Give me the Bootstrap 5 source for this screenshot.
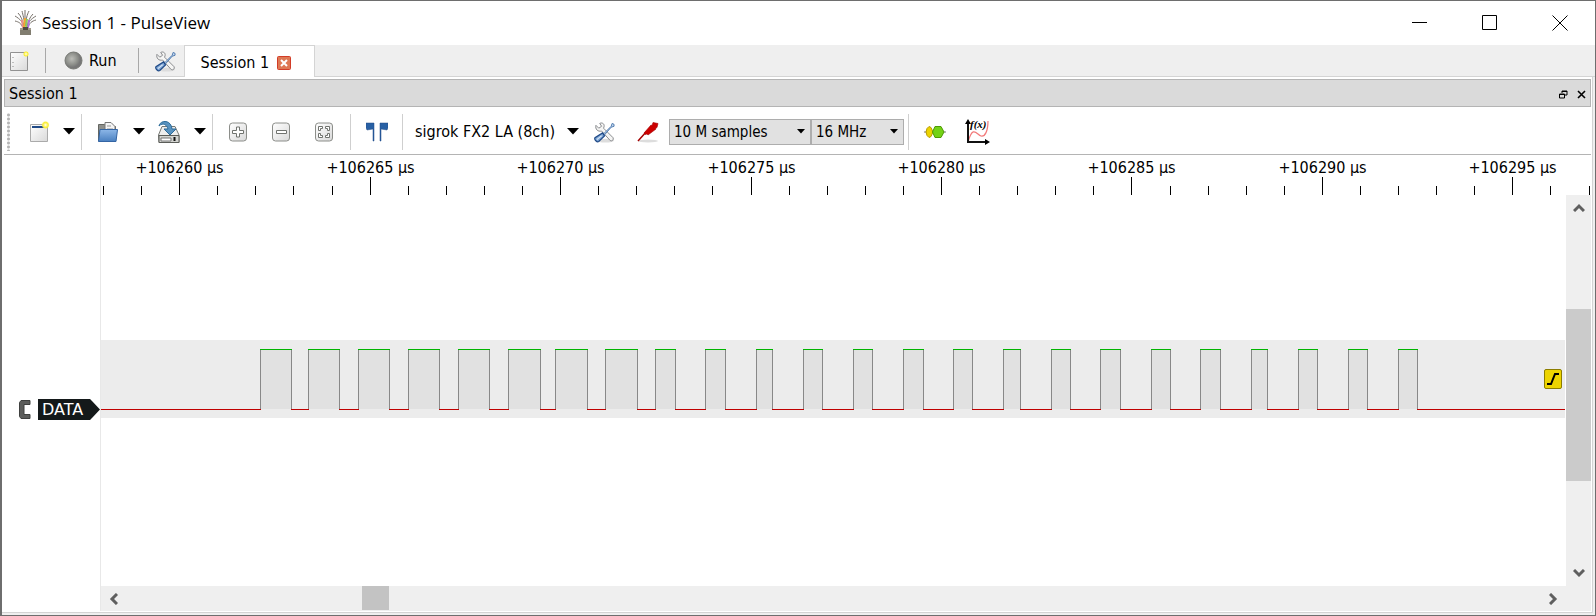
<!DOCTYPE html>
<html lang="en">
<head>
<meta charset="utf-8">
<meta name="viewport" content="width=device-width, initial-scale=1">
<title>Session 1 - PulseView</title>
<link href="https://cdn.jsdelivr.net/npm/bootstrap@5.3.0/dist/css/bootstrap.min.css" rel="stylesheet">
<style>
body { font: 16px/20px "DejaVu Sans Condensed", "DejaVu Sans", sans-serif; color: #000; background: #6e6e6e; }
.app-frame { padding: 1px 1px 1px 2px; }
.app-inner { background: #efefef; }
button, select { color: inherit; font: inherit; }
.flat { border: 0; padding: 0; background: none; display: flex; align-items: center; justify-content: center; flex: none; }
svg { display: block; flex: none; }
.titlebar { height: 44px; padding-left: 12px; font: 17px/24px "Open Sans", "Noto Sans", sans-serif; }
.titlebar h1 { font: inherit; margin: 0 0 0 5px; }
.titlebar .flat { width: 70px; height: 44px; }
.tabstrip { height: 32px; }
.strip-tools { border-bottom: 1px solid #d4d4d4; padding-left: 7px; }
.vr-line { width: 1px; height: 25px; background: #a8a8a8; flex: none; }
.run-btn { gap: 6px; margin: 0 21px 0 18px; }
.session-tab { width: 131px; padding: 2px 0 0 16px; gap: 8px; border: 1px solid #d4d4d4; border-bottom: 0; }
.dock { border: solid #d4d4d4; border-width: 0 1px 1px 0; margin: 0 2px 2px 0; padding: 2px 1px 1px 2px; }
.dock-title { height: 28px; background: #dadada; border: 1px solid #b4b4b4; padding: 2px 0 0 4px; }
.dock-title h2 { font: inherit; margin: 0; }
.dock-title .flat { width: 18px; height: 18px; }
.toolbar { height: 48px; border-bottom: 1px solid #b4b4b4; padding: 2px 3px 0; }
.grip { width: 3px; height: 38px; background: radial-gradient(circle, #b5b5b5 1px, transparent 2px) 0 0 / 3px 4px; }
.tool-sep { width: 1px; height: 36px; background: #cfcfcf; flex: none; }
.ico { width: 43px; height: 36px; }
.ico-menu { width: 16px; height: 36px; }
.file-menu { margin-left: 2px; }
.device-btn { gap: 12px; }
.combo { appearance: none; height: 26px; border: 1px solid #adadad; border-radius: 0; padding: 0 20px 0 4px; font-size: 15px; background: #e1e1e1 url("data:image/svg+xml,%3Csvg xmlns='http://www.w3.org/2000/svg' width='8' height='5'%3E%3Cpath d='M0 0h8L4 4.5z'/%3E%3C/svg%3E") no-repeat right 5px center; }
.combo-samples { width: 142px; }
.combo-rate { width: 93px; }
.headers { width: 97px; border-right: 1px solid #e8e8e8; }
.ruler { height: 40px; }
.ruler text { text-anchor: middle; }
.signal-area { height: 391px; }
.channel { padding-top: 244px; gap: 7px; padding-left: 14px; }
.channel-name { width: 62px; height: 21px; background: #14191a; color: #fff; font-family: "DejaVu Sans", sans-serif; justify-content: flex-start; padding-left: 4px; clip-path: polygon(0 0, 84% 0, 100% 50%, 84% 100%, 0 100%); }
.canvas-pane { padding-right: 1px; }
.trace { height: 78px; margin-top: 145px; background: #ececec; }
.trigger { right: 3px; top: 29px; width: 18px; height: 20px; border: 1px solid #8c7d00; border-radius: 2px; background: #edd400; }
.scroll-v { width: 25px; background: #efefef; }
.scroll-h { height: 25px; background: #efefef; padding-right: 25px; }
.scroll-v .flat, .scroll-h .flat { width: 25px; height: 25px; }
.track { position: relative; }
.thumb { position: absolute; background: #cbcbcb; }
.thumb-h { top: 0; bottom: 1px; background: #c3c3c3; }
</style>
</head>
<body>
<svg width="0" height="0" class="position-absolute" aria-hidden="true">
  <defs>
    <linearGradient id="paper" x2="1" y2="1"><stop stop-color="#fff"/><stop offset="1" stop-color="#d9d9d9"/></linearGradient>
    <linearGradient id="blue" x2="0" y2="1"><stop stop-color="#8db7e8"/><stop offset="1" stop-color="#4a80c0"/></linearGradient>
    <radialGradient id="ball" cx=".4" cy=".4"><stop stop-color="#bcbdb8"/><stop offset=".7" stop-color="#8d8f8a"/><stop offset="1" stop-color="#777"/></radialGradient>
    <radialGradient id="sun"><stop stop-color="#fff"/><stop offset=".35" stop-color="#fff680"/><stop offset=".7" stop-color="#f8ed32"/><stop offset="1" stop-color="#fff45a" stop-opacity=".15"/></radialGradient>
    <symbol id="tools" viewBox="0 0 22 22">
      <ellipse cx="12" cy="20" rx="9" ry="2" fill="#ddd"/>
      <path d="M2 4 5 7 8 5 6 2C9 .5 12 3 10 7l10 10c1 2-1 4-3 3L8 10C4 11 1 8 2 4Z" fill="#f5f5f4" stroke="#85878a"/>
      <path d="m10 13 8-8 1-3 2 1v2l-3 1-7 8Z" fill="#c5daf1" stroke="#4d79ad"/>
      <path d="m9 12 2 3-6 6c-2 1-5-2-4-4Z" fill="#7fa7d6" stroke="#204a87" stroke-width="1.3"/><path d="m8 15-5 4" stroke="#d6e5f6" stroke-width="1.2"/>
    </symbol>
    <symbol id="caret" viewBox="0 0 12 7"><path d="M0 0h12L6 6.500z"/></symbol>
    <symbol id="chev" viewBox="0 0 12 9"><path d="m1 8 5-5 5 5" fill="none" stroke="#5f5f5f" stroke-width="3"/></symbol>
  </defs>
</svg>
<div class="app-frame min-vh-100 d-flex flex-column">
<div class="app-inner flex-fill d-flex flex-column">
  <header class="titlebar bg-white d-flex align-items-center">
    <svg width="23" height="26" viewBox="0 0 23 26" fill="none">
      <path d="M10 17C9 12 6 9 1 6m9 11C9 11 7 6 4 3m7 13C10 9 9 5 8 1m3 15V0m1 16c0-8 1-11 3-15m-2 16c1-6 3-10 6-13m-6 13c1-5 4-8 9-11M9 18C7 13 5 12 1 11m13 7c1-5 4-7 8-8" stroke="#77716a"/>
      <path d="M9 18 8 10" stroke="#e99090" stroke-width="2"/><path d="m10 18 1-10" stroke="#f4a632" stroke-width="2"/><path d="m12 18 1-9" stroke="#8ccf5a" stroke-width="2"/><path d="m14 18 1-8" stroke="#ae76dd" stroke-width="2"/>
      <path d="M6 18h11v7H6z" fill="#817d70"/><path d="M6 18h11v2H6z" fill="#a09b8b"/><path d="M9 17h5v3H9z" fill="#4f4b44"/>
    </svg>
    <h1 class="me-auto">Session 1 - PulseView</h1>
    <button class="flat" aria-label="Minimize"><svg width="16" height="16"><path d="M0 7.500h15" stroke="#000"/></svg></button>
    <button class="flat" aria-label="Maximize"><svg width="16" height="16"><path d="M.5.500h14v14H.5z" fill="none" stroke="#000"/></svg></button>
    <button class="flat" aria-label="Close"><svg width="16" height="16"><path d="m.5.500 15 15m0-15-15 15" stroke="#000"/></svg></button>
  </header>

  <nav class="tabstrip d-flex">
    <div class="strip-tools d-flex align-items-center">
      <button class="flat" aria-label="New session"><svg width="20" height="22" viewBox="0 0 20 22"><path d="M1.500 2.500h17v18h-17z" fill="url(#paper)" stroke="#929292"/><path d="M4 7v1m0 4v1m0 3v1" stroke="#888"/><circle cx="17" cy="4" r="3" fill="url(#sun)"/></svg></button>
      <span class="vr-line ms-3"></span>
      <button class="flat run-btn"><svg width="19" height="19"><circle cx="9.500" cy="9.500" r="8.500" fill="url(#ball)" stroke="#777974"/></svg>Run</button>
      <span class="vr-line me-3"></span>
      <button class="flat me-2" aria-label="Settings"><svg width="21" height="22"><use href="#tools"/></svg></button>
    </div>
    <div class="session-tab bg-white d-flex align-items-center">
      <span>Session 1</span>
      <button class="flat" aria-label="Close session"><svg width="14" height="14"><rect x=".5" y=".5" width="13" height="13" rx="1" fill="#de7854" stroke="#d23c27"/><path d="m4 4 6 6m0-6-6 6" stroke="#fff" stroke-width="2"/></svg></button>
    </div>
    <div class="strip-tools flex-fill"></div>
  </nav>

  <main class="dock bg-white flex-fill d-flex flex-column">
    <div class="dock-title d-flex align-items-center">
      <h2 class="me-auto">Session 1</h2>
      <button class="flat" aria-label="Float"><svg width="9" height="9" fill="none" stroke="#000"><path d="M3 3V1h5v4H6M3 1.500h5"/><path d="M.5 4h5v4h-5zM0 4.500h6"/></svg></button>
      <button class="flat" aria-label="Close dock"><svg width="9" height="9"><path d="m1 1 7 7m0-7-7 7" stroke="#000" stroke-width="1.600"/></svg></button>
    </div>

    <div class="toolbar d-flex align-items-center" role="toolbar">
      <span class="grip"></span>
      <button class="flat ico ms-2" aria-label="New view"><svg width="21" height="22" viewBox="0 0 21 22"><path d="M1.500 3.500h17v17h-17z" fill="url(#paper)" stroke="#aaa"/><path d="M3 6h15" stroke="#204a87" stroke-width="2"/><circle cx="16.500" cy="4" r="4" fill="url(#sun)"/></svg></button>
      <button class="flat ico-menu" aria-label="New view menu"><svg width="12" height="7"><use href="#caret"/></svg></button>
      <span class="tool-sep ms-1"></span>
      <button class="flat ico ms-1" aria-label="Open"><svg width="22" height="22" viewBox="0 0 22 22"><path d="M1.500 20V3.500h6l2 2h9V20Z" fill="#8e908c" stroke="#646661"/><path d="M8 10V1.500h6l4 4V10" fill="#f5f5f5" stroke="#777"/><path d="M10 5h4m-4 3h6" stroke="#999"/><path d="M3 8.500h17.500L19 20.500H1.500Z" fill="url(#blue)" stroke="#3465a4"/></svg></button>
      <button class="flat ico-menu file-menu" aria-label="Open menu"><svg width="12" height="7"><use href="#caret"/></svg></button>
      <button class="flat ico" aria-label="Save"><svg width="24" height="24" viewBox="0 0 24 24"><path d="M1.500 15 5 6.500h13l4 8.500v7.500h-20Z" fill="#eee" stroke="#777974"/><path d="M2 15.500h20v7H2z" fill="#d3d4d0" stroke="#5b5d59"/><path d="M4 18h10v3H4z" fill="#fff" stroke="#777"/><path d="M17.500 17v4" stroke="#111" stroke-width="2"/><path d="M2 6C3 0 14-1 15 9h4l-6 6-6-6h4C10 5 6 2 2 6Z" fill="#5892bf" stroke="#2c6b99"/></svg></button>
      <button class="flat ico-menu file-menu" aria-label="Save menu"><svg width="12" height="7"><use href="#caret"/></svg></button>
      <span class="tool-sep ms-1"></span>
      <button class="flat ico ms-1" aria-label="Zoom in"><svg width="19" height="20" viewBox="0 0 19 20"><rect x=".5" y="1" width="17" height="18" rx="3" fill="url(#paper)" stroke="#8c8e8a"/><path d="M7.500 5h3v3.500h4v3h-4V15h-3v-3.500h-4v-3h4z" fill="#fff" stroke="#70736f"/></svg></button>
      <button class="flat ico" aria-label="Zoom out"><svg width="19" height="20" viewBox="0 0 19 20"><rect x=".5" y="1" width="17" height="18" rx="3" fill="url(#paper)" stroke="#8c8e8a"/><path d="M4.500 8.500h10v3h-10z" fill="#fff" stroke="#70736f"/></svg></button>
      <button class="flat ico" aria-label="Zoom to fit"><svg width="19" height="20" viewBox="0 0 19 20"><rect x=".5" y="1" width="17" height="18" rx="3" fill="url(#paper)" stroke="#8c8e8a"/><path d="M3.500 8.500v-4h4v2h-2v2zM10.500 4.500h4v4h-2v-2h-2zM3.500 11.500v4h4v-2h-2v-2zM14.500 11.500v4h-4v-2h2v-2z" fill="#fff" stroke="#70736f"/></svg></button>
      <span class="tool-sep ms-1"></span>
      <button class="flat ico ms-1" aria-label="Show cursors"><svg width="22" height="20"><path d="M0 1h8v18H7V7L1 8 0 6zM22 1h-8v18h1V7l6 1 1-2z" fill="#2860a4" stroke="#204a87" stroke-width=".5"/></svg></button>
      <span class="tool-sep ms-1"></span>
      <button class="flat ms-2 ps-1 device-btn">sigrok FX2 LA (8ch)<svg width="12" height="7"><use href="#caret"/></svg></button>
      <button class="flat ico ms-1" aria-label="Configure device"><svg width="21" height="22"><use href="#tools"/></svg></button>
      <button class="flat ico" aria-label="Configure channels"><svg width="22" height="22" viewBox="0 0 22 22"><ellipse cx="11" cy="20" rx="10" ry="1.500" fill="#ddd"/><path d="M1 20 10 10" stroke="#a40000" stroke-width="1.500"/><path d="m7 12 7-8 1 .500 1-3 5 1-1 4-1.500.500.500 1-8 6-1-1-2 .500Z" fill="#cc0000" stroke="#a40000" stroke-width=".6"/></svg></button>
      <select class="combo combo-samples" aria-label="Sample count"><option>10 M samples</option></select>
      <select class="combo combo-rate" aria-label="Sample rate"><option>16 MHz</option></select>
      <span class="tool-sep ms-1"></span>
      <button class="flat ico ms-1" aria-label="Add protocol decoder"><svg width="22" height="14" viewBox="0 0 22 14"><path d="M0 7h22" stroke="#777"/><path d="m5 1.500 2 1 2 4.500-2 4.500-2 1-2-2L2 7l1-3.500Z" fill="#edd400" stroke="#b79b00"/><path d="M11 1.500h6L20 7l-3 5.500h-6L8.500 7Z" fill="#73d216" stroke="#4e9a06"/></svg></button>
      <button class="flat ico" aria-label="Add math signal"><svg width="26" height="26" viewBox="0 0 26 26"><path d="M3 23C8 5 12 16 16 17s7-5 7-15" fill="none" stroke="#f27a7a" stroke-width="1.200"/><path d="M3 4v19h18" fill="none" stroke="#111" stroke-width="2"/><path d="m3 0 3 5H0zM25 23l-5 3v-6z"/><text x="5" y="9" font-family="Liberation Serif, serif" font-style="italic" font-weight="bold" font-size="11">f(x)</text></svg></button>
    </div>

    <div class="d-flex flex-fill">
      <section class="headers">
        <div class="channel d-flex">
          <svg width="13" height="21" viewBox="0 0 13 21"><path d="M12 1.500H3l-1.500 2v14l1.500 2h9v-4H6v-10h6Z" fill="#5c5d5b" stroke="#3f403f"/></svg>
          <button class="flat channel-name">DATA</button>
        </div>
      </section>
      <section class="flex-fill d-flex flex-column overflow-hidden">
        <svg class="ruler w-100" id="ruler"></svg>
        <div class="signal-area d-flex flex-fill">
          <div class="canvas-pane flex-fill overflow-hidden">
            <div class="trace position-relative overflow-hidden">
              <svg class="w-100 h-100" id="wave" shape-rendering="crispEdges"></svg>
              <button class="flat trigger position-absolute" aria-label="Rising edge trigger"><svg width="14" height="14"><path d="M1 12h4l4-10h4" fill="none" stroke="#000" stroke-width="2"/></svg></button>
            </div>
          </div>
          <div class="scroll-v d-flex flex-column">
            <button class="flat" aria-label="Scroll up"><svg width="12" height="9"><use href="#chev"/></svg></button>
            <div class="track flex-fill"><div class="thumb w-100" style="top:26%;height:50.400%"></div></div>
            <button class="flat" aria-label="Scroll down"><svg width="12" height="9"><g transform="rotate(180 6 4.500)"><use href="#chev"/></g></svg></button>
          </div>
        </div>
        <div class="scroll-h d-flex">
          <button class="flat" aria-label="Scroll left"><svg width="9" height="12"><path d="M8 1 3 6l5 5" fill="none" stroke="#5f5f5f" stroke-width="3"/></svg></button>
          <div class="track flex-fill"><div class="thumb thumb-h" style="left:16.700%;width:1.900%"></div></div>
          <button class="flat" aria-label="Scroll right"><svg width="9" height="12"><path d="m1 1 5 5-5 5" fill="none" stroke="#5f5f5f" stroke-width="3"/></svg></button>
        </div>
      </section>
    </div>
  </main>
</div>
</div>
<script src="https://cdn.jsdelivr.net/npm/bootstrap@5.3.0/dist/js/bootstrap.bundle.min.js"></script>
<script>
// Time ruler: one tick per microsecond, a labelled one every five, as far as the view reaches.
const pxPerUs = 38.09, firstUs = 106258, rulerEl = document.getElementById('ruler');
function drawRuler() {
  const width = rulerEl.getBoundingClientRect().width;
  let ruler = '';
  for (let i = 0; 2 + i * pxPerUs < width; i++) {
    const us = firstUs + i, x = Math.round(2 + i * pxPerUs) + 0.5, major = us % 5 === 0;
    ruler += `<path d="M${x} ${major ? 22 : 31}V40" stroke="#000"/>`;
    if (major && x + 45 < width) ruler += `<text x="${x}" y="18">+${us} µs</text>`;
  }
  rulerEl.innerHTML = ruler;
}
drawRuler();
addEventListener('resize', drawRuler);

// High periods of the DATA line as [rise, fall].
const pulses = [[159,190],[207,238],[257,288],[307,338],[357,388],[407,439],[454,486],[504,536],[554,574],[604,624],
  [655,671],[702,721],[752,771],[802,822],[852,871],[902,919],[950,969],[999,1019],[1050,1069],[1099,1119],
  [1150,1166],[1197,1216],[1247,1266],[1297,1316]];
let wave = '', low = 0;
for (const [a, b] of pulses) {
  wave += `<path d="M${a}.5 69V9.500H${b}.5V69" fill="#e1e1e1" stroke="#888"/>` +
          `<path d="M${a} 9.500H${b + 1}" stroke="#00b400"/><path d="M${low} 69.500H${a + 1}" stroke="#c00000"/>`;
  low = b;
}
wave += `<line x1="${low}" x2="100%" y1="69.500" y2="69.500" stroke="#c00000"/>`;
document.getElementById('wave').innerHTML = wave;
</script>
</body>
</html>
